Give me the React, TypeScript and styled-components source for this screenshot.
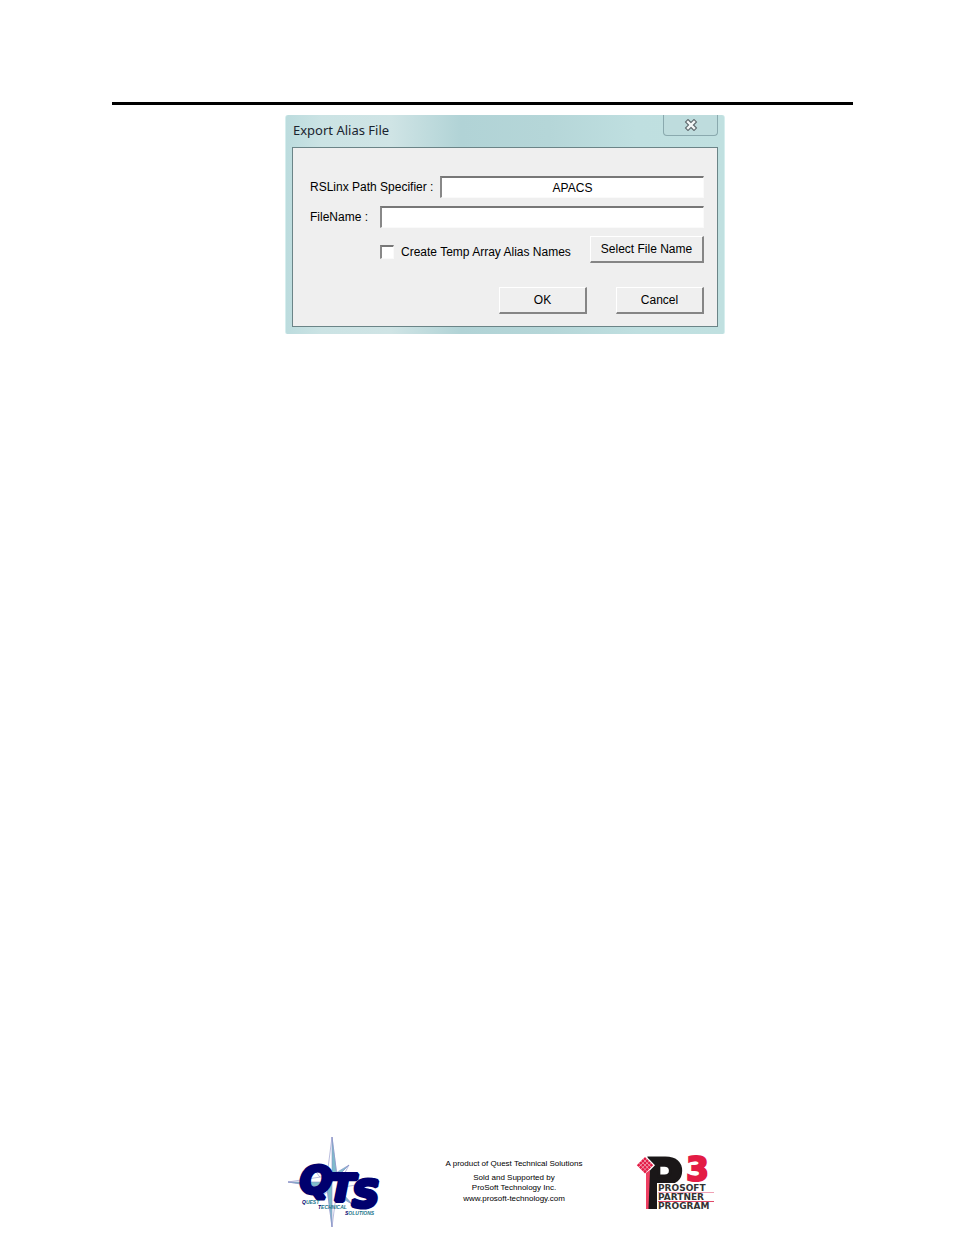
import React from "react";
import styled, { createGlobalStyle } from "styled-components";

const Global = createGlobalStyle`
  * { box-sizing: border-box; }
  body { margin: 0; background: #fff; color: #000; font-family: "Liberation Sans", Arial, sans-serif; }
`;

const Page = styled.div`
  min-height: 100vh;
  display: flex;
  flex-direction: column;
  align-items: center;
  padding: 102px 101px 7px 112px;
`;

const Rule = styled.hr`
  width: 100%;
  height: 3px;
  margin: 0 0 10px;
  border: 0;
  background: #000;
`;

const Dialog = styled.section`
  width: 440px;
  margin-left: 45px;
  padding: 0 6px 7px;
  border: 0 solid #d6eeee;
  border-width: 0 1px;
  border-radius: 3px 3px 2px 2px;
  background: linear-gradient(90deg, #bcdcde 0, #cbe3e4 8%, #cfe4e5 24%, #b1d3d6 40%, #b5d6d8 60%, #bfdfe0 80%, #c0e0e0 100%);
`;

const TitleBar = styled.header`
  display: flex;
  justify-content: space-between;
  align-items: flex-start;
  height: 32px;
`;

const Title = styled.h1`
  margin: 6px 0 0 1px;
  font: 400 13px/18px "Noto Sans", "Open Sans", sans-serif;
  color: #1b2530;
`;

const CloseButton = styled.button`
  width: 55px;
  height: 21px;
  padding: 0;
  display: flex;
  justify-content: center;
  align-items: center;
  border: 1px solid #8aa9ae;
  border-top: 0;
  border-radius: 0 0 4px 4px;
  background: #bedcdd;
`;

const Form = styled.form`
  border: 1px solid #6b8487;
  background: #efefef;
  padding: 28px 13px 12px 17px;
  font-size: 12px;
  line-height: 16px;
`;

const Field = styled.div`
  display: flex;
  align-items: center;
  height: 22px;
  margin-bottom: 8px;
`;

const Label = styled.label<{ $width: number }>`
  width: ${(p) => p.$width}px;
  flex: none;
  white-space: nowrap;
`;

const TextInput = styled.input`
  flex: 1;
  min-width: 0;
  height: 22px;
  padding: 0 4px;
  border: 1px solid #fafafa;
  border-top: 2px solid #777;
  border-left: 2px solid #888;
  background: #fff;
  font: 12px/16px "Liberation Sans", Arial, sans-serif;
  color: #000;
  text-align: center;
  outline: 0;
`;

const OptionRow = styled.div`
  display: flex;
  justify-content: space-between;
  align-items: center;
  padding-left: 70px;
  margin-bottom: 24px;
`;

const CheckLabel = styled.label`
  display: flex;
  align-items: center;
  gap: 7px;
  padding-top: 4px;
  white-space: nowrap;
`;

const Check = styled.input`
  appearance: none;
  width: 14px;
  height: 14px;
  margin: 0;
  border: 1px solid #fafafa;
  border-top: 2px solid #777;
  border-left: 2px solid #888;
  background: #fff;
`;

const Button = styled.button<{ $width: number }>`
  width: ${(p) => p.$width}px;
  height: 27px;
  padding: 0 0 1px;
  border: 1px solid #fff;
  border-right: 2px solid #858585;
  border-bottom: 2px solid #858585;
  background: #efefef;
  font: 12px/16px "Liberation Sans", Arial, sans-serif;
  color: #000;
  white-space: nowrap;
`;

const Actions = styled.div`
  display: flex;
  justify-content: flex-end;
  gap: 29px;
`;

const Footer = styled.footer`
  width: 100%;
  margin-top: auto;
  padding: 0 138px 0 174px;
  display: flex;
  justify-content: space-between;
  align-items: center;
`;

const Credits = styled.div`
  display: grid;
  gap: 4px;
  padding: 0 0 2px 10px;
  font-size: 8px;
  line-height: 10px;
  text-align: center;
  white-space: nowrap;
`;

const CreditLine = styled.p`
  margin: 0;
`;

const SiteLink = styled.a`
  display: block;
  margin-top: 1px;
  color: inherit;
  text-decoration: none;
`;

const Logo = styled.svg`
  flex: none;
  overflow: visible;
`;

function QtsLogo() {
  return (
    <Logo width="96" height="92" viewBox="286 1136 96 92" role="img" aria-label="QTS Quest Technical Solutions">
      <g stroke="#8b90c8" strokeWidth="0.6" fill="#fff" strokeLinejoin="round">
        <path d="M332 1182L314 1169L327 1187ZM332 1182L349 1165L338 1186ZM332 1182L315 1198L328 1192ZM332 1182L352 1204L338 1196Z" />
        <path fill="#7fbccb" d="M332 1182L349 1165L334 1174ZM332 1182L352 1204L344 1199Z" />
        <path d="M332 1137L327 1176L288 1182L327 1188L332 1227L337 1188L375 1182L337 1176Z" />
        <path fill="#7fbccb" d="M332 1137L337 1176L332 1182ZM288 1182H332L327 1188ZM332 1227V1182L327 1188Z" />
      </g>
      <g fontWeight="700" fontStyle="italic" fill="#00006e">
        <g fontFamily="DejaVu Sans, sans-serif" fontSize="38" stroke="#00006e" strokeWidth="4" strokeLinejoin="bevel">
          <text x="300" y="1193">Q</text>
          <text x="329" y="1201">T</text>
          <text x="352" y="1207">S</text>
        </g>
        <g fontFamily="Liberation Sans, Arial, sans-serif" fontSize="5" fill="#20738b">
          <text x="302" y="1204"><tspan fill="#00006e">Q</tspan>UEST</text>
          <text x="318" y="1209"><tspan fill="#00006e">T</tspan>ECHNICAL</text>
          <text x="345" y="1215"><tspan fill="#00006e">S</tspan>OLUTIONS</text>
        </g>
      </g>
    </Logo>
  );
}

const diamonds = [0, 1, 2, 3].flatMap((r) =>
  [0, 1, 2, 3].map((c) => ({ x: 645 + (c - r) * 2.1, y: 1158.9 + (c + r) * 2.1 })),
);

function P3Logo() {
  return (
    <Logo width="79" height="70" viewBox="636 1147 79 70" role="img" aria-label="P3 ProSoft Partner Program">
      <g fontFamily="DejaVu Sans, sans-serif" fontWeight="700">
        <text x="644" y="1197" fontSize="53" fill="#1a1718" stroke="#1a1718" strokeWidth="3">P</text>
        <text x="686" y="1181" fontSize="33" fill="#e31b45" stroke="#e31b45" strokeWidth="2">3</text>
        <path d="M646 1170H657V1209H646Z" fill="#1a1718" />
        <path d="M657 1183H715V1210H657Z" fill="#fff" />
        <g fontSize="9" fill="#333">
          <text x="658" y="1191">PROSOFT</text>
          <text x="658" y="1200">PARTNER</text>
          <text x="658" y="1209">PROGRAM</text>
        </g>
      </g>
      <path d="M658 1192.500H714" stroke="#f0a0b4" strokeWidth="1" />
      <path d="M658 1201.500H714" stroke="#e04a6a" strokeWidth="1" />
      <path d="M645 1155L655 1165.200L645 1175.500L635 1165.200Z" fill="#fff" />
      <path d="M646 1173L650 1170L648.500 1209H646Z" fill="#ee3f62" />
      {diamonds.map((d, i) => (
        <path key={i} d={`M${d.x} ${d.y - 1.9}l1.9 1.9l-1.9 1.9l-1.9 -1.9z`} fill="#e31b45" />
      ))}
    </Logo>
  );
}

export default function App() {
  return (
    <>
      <Global />
      <Page>
        <Rule />
        <Dialog aria-label="Export Alias File">
          <TitleBar>
            <Title>Export Alias File</Title>
            <CloseButton type="button" aria-label="Close">
              <svg width="14" height="12" viewBox="0 0 14 12">
                <path d="M4 3L10 9M10 3L4 9" stroke="#5f686c" strokeWidth="4.600" strokeLinecap="square" />
                <path d="M4 3L10 9M10 3L4 9" stroke="#f4f8f8" strokeWidth="2.400" strokeLinecap="square" />
              </svg>
            </CloseButton>
          </TitleBar>
          <Form onSubmit={(e) => e.preventDefault()}>
            <Field>
              <Label htmlFor="path" $width={130}>RSLinx Path Specifier :</Label>
              <TextInput id="path" defaultValue="APACS" />
            </Field>
            <Field>
              <Label htmlFor="file" $width={70}>FileName :</Label>
              <TextInput id="file" />
            </Field>
            <OptionRow>
              <CheckLabel>
                <Check type="checkbox" />
                Create Temp Array Alias Names
              </CheckLabel>
              <Button type="button" $width={114}>Select File Name</Button>
            </OptionRow>
            <Actions>
              <Button type="submit" $width={88}>OK</Button>
              <Button type="button" $width={88}>Cancel</Button>
            </Actions>
          </Form>
        </Dialog>
        <Footer>
          <QtsLogo />
          <Credits>
            <CreditLine>A product of Quest Technical Solutions</CreditLine>
            <CreditLine>
              Sold and Supported by<br />ProSoft Technology Inc.
              <SiteLink href="#">www.prosoft-technology.com</SiteLink>
            </CreditLine>
          </Credits>
          <P3Logo />
        </Footer>
      </Page>
    </>
  );
}
